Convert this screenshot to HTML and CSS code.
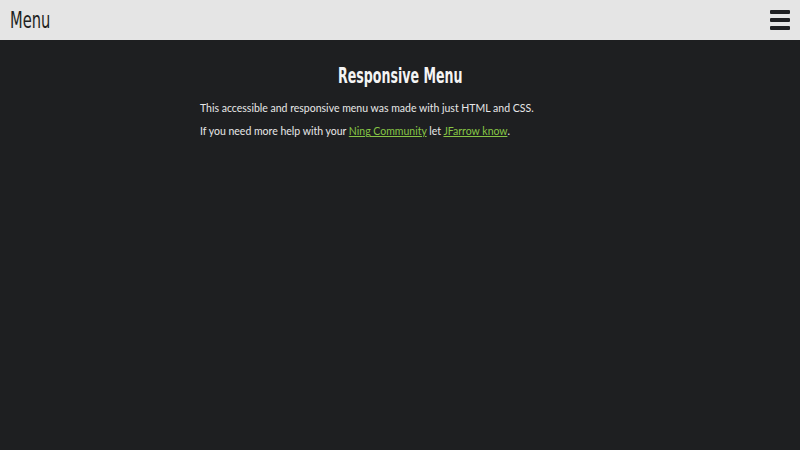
FILE: index.html
```html
<!DOCTYPE html>
<html lang="en">
<head>
<meta charset="utf-8">
<title>Responsive Menu</title>
<link rel="stylesheet" href="styles.css">
</head>
<body>
<header class="topbar">
  <span class="brand">Menu</span>
  <button class="burger" aria-label="Open menu">
    <span class="bar"></span><span class="bar"></span><span class="bar"></span>
  </button>
</header>
<main class="content">
  <h1 class="title"><span class="title-text">Responsive Menu</span></h1>
  <p class="text">This accessible and responsive menu was made with just HTML and CSS.</p>
  <p class="text">If you need more help with your <a href="#" class="link">Ning Community</a> let <a href="#" class="link">JFarrow know</a>.</p>
</main>
</body>
</html>
```
FILE: styles.css
```css
html, body {
  margin: 0;
  padding: 0;
  height: 100%;
}
body {
  background: #1e1f21;
  color: #e8e8e8;
  font-family: "Lato", "Open Sans", sans-serif;
}
.topbar {
  height: 40px;
  background: #e5e5e5;
  display: flex;
  align-items: center;
  justify-content: space-between;
  padding: 0 10px;
}
.brand {
  display: inline-block;
  font-family: "Liberation Sans Narrow", "DejaVu Sans Condensed", sans-serif;
  font-size: 23px;
  color: #1e1f21;
  transform: scaleX(0.71);
  transform-origin: left center;
}
.burger {
  background: none;
  border: 0;
  padding: 0;
  width: 20px;
  height: 20px;
  display: flex;
  flex-direction: column;
  justify-content: space-between;
}
.bar {
  display: block;
  height: 4px;
  width: 20px;
  background: #1e1f21;
  border-radius: 1px;
}
.content {
  width: 400px;
  margin: 0 auto;
  padding-top: 24px;
}
.title {
  margin: 0 0 13px;
  text-align: center;
  font-family: "Liberation Sans Narrow", "DejaVu Sans Condensed", sans-serif;
  font-weight: bold;
  font-size: 21px;
  line-height: 24px;
  color: #f4f4f4;
}
.title-text {
  display: inline-block;
  transform: scaleX(0.667);
  transform-origin: center;
}
.text {
  margin: 0 0 9px;
  font-size: 10.5px;
  line-height: 14px;
}
.link {
  color: #86c545;
}
```
